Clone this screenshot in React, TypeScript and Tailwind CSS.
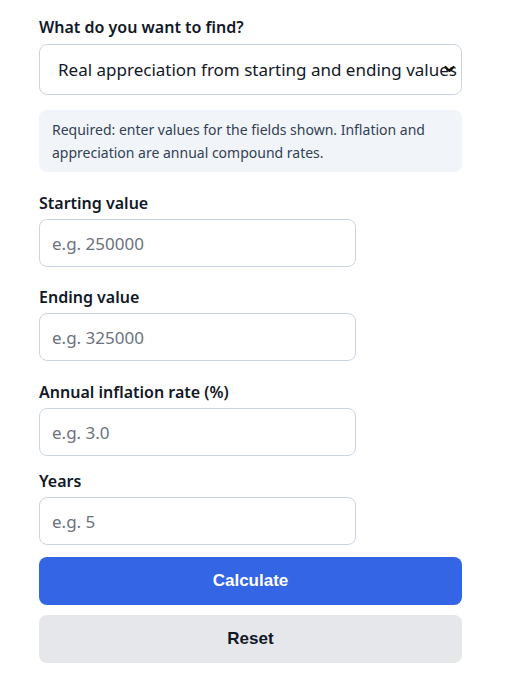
const fields = [
  { label: "Starting value", placeholder: "e.g. 250000", top: "mt-[19px]" },
  { label: "Ending value", placeholder: "e.g. 325000", top: "mt-[18px]" },
  { label: "Annual inflation rate (%)", placeholder: "e.g. 3.0", top: "mt-[19px]" },
  { label: "Years", placeholder: "e.g. 5", top: "mt-[13px]" },
];

export default function App() {
  return (
    <main className="min-h-[697px] bg-white pt-[15px] font-['Noto_Sans','Open_Sans',sans-serif] text-[#111827]">
      <div className="ml-[39px] w-[423px]">
        <label className="block text-[16px] font-semibold leading-[24px]">What do you want to find?</label>
        <div className="relative mt-[5px] h-[51px] rounded-[8px] border border-[#cbd5e1] bg-white">
          <div className="flex h-full items-center overflow-hidden whitespace-nowrap pl-[18px] pr-[14px] text-[17px] text-[#111827]">
            Real appreciation from starting and ending values
          </div>
          {/* select arrow */}
          <svg className="absolute right-[6px] top-[20px]" width="11" height="8" viewBox="0 0 11 8">
            <polyline points="1.5,2 5.5,6 9.5,2" fill="none" stroke="#111" strokeWidth="2.2" strokeLinecap="round" strokeLinejoin="round" />
          </svg>
        </div>

        {/* note box */}
        <div className="mt-[15px] rounded-[8px] bg-[#f1f5f9] px-[13px] py-[8px] text-[14px] leading-[23px] text-[#334155]">
          Required: enter values for the fields shown. Inflation and appreciation are annual compound rates.
        </div>

        {fields.map((f) => (
          <div key={f.label} className={f.top}>
            <label className="block text-[16px] font-semibold leading-[24px]">{f.label}</label>
            <input
              type="text"
              placeholder={f.placeholder}
              className="mt-[4px] block h-[48px] w-[317px] rounded-[8px] border border-[#cbd5e1] bg-white px-[12px] text-[17px] placeholder:text-[#6b7280] outline-none"
            />
          </div>
        ))}

        <button
          type="button"
          className="mt-[12px] block h-[48px] w-full cursor-pointer rounded-[8px] bg-[#3465e5] font-['Liberation_Sans',Arial,sans-serif] text-[17px] font-bold text-white"
        >
          Calculate
        </button>
        <button
          type="button"
          className="mt-[10px] block h-[48px] w-full cursor-pointer rounded-[8px] bg-[#e5e7eb] font-['Liberation_Sans',Arial,sans-serif] text-[17px] font-bold text-[#111827]"
        >
          Reset
        </button>
      </div>
    </main>
  );
}
